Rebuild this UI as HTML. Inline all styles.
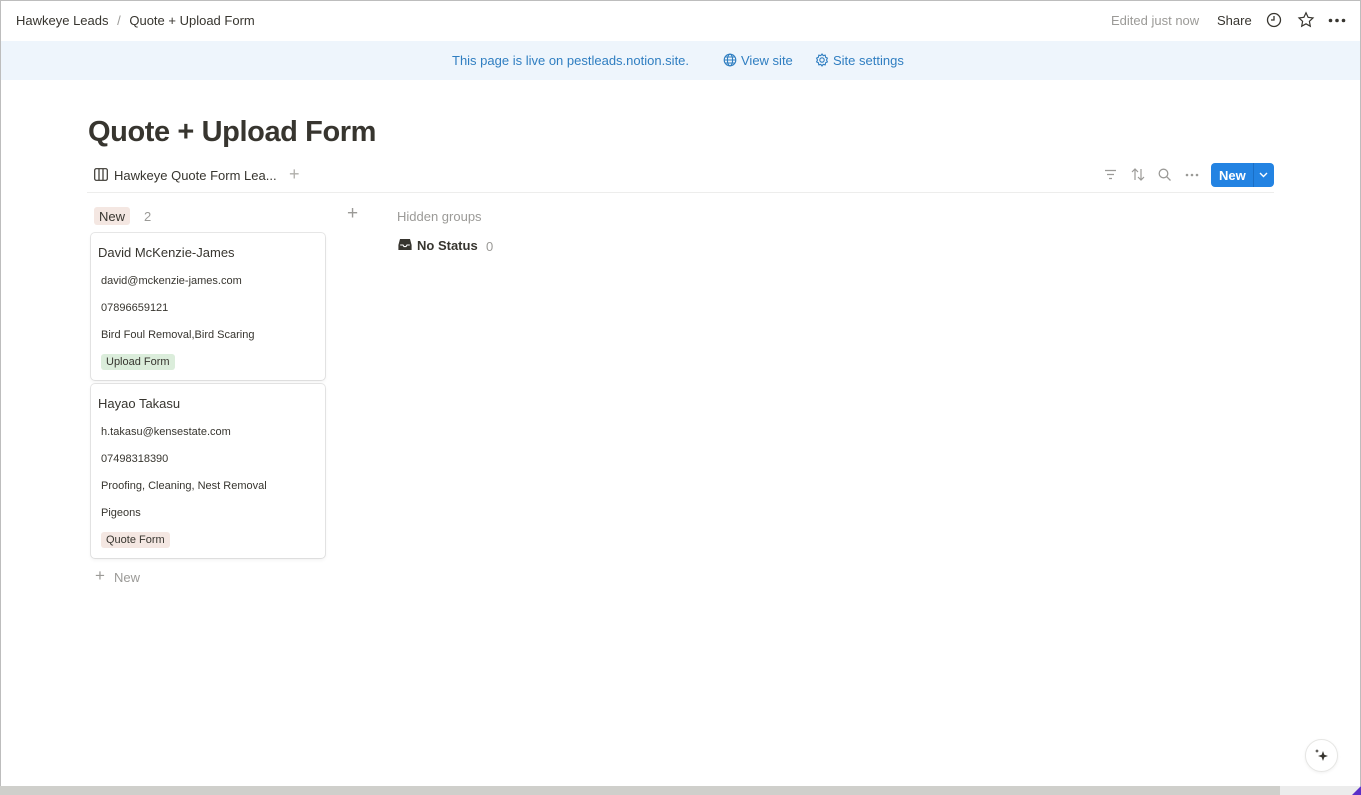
<!DOCTYPE html>
<html><head><meta charset="utf-8"><style>
*{box-sizing:border-box;margin:0;padding:0}
body{width:1361px;height:795px;overflow:hidden;background:#fff;font-family:"Liberation Sans",sans-serif;color:#37352f;position:relative}
.frame{position:absolute;inset:0;border:1px solid #bdbdbd;border-bottom:none}
.abs{position:absolute;white-space:nowrap}
.card{position:absolute;left:91px;width:234px;border-radius:4px;box-shadow:0 0 0 1px rgba(15,15,15,.1),0 2px 4px rgba(15,15,15,.06);background:#fff}
.f{position:absolute;left:10px;font-size:11px;color:#37352f}
.tag{position:absolute;left:10px;font-size:11px;padding:2px 5px;border-radius:3px}
</style></head><body>
<div class="frame"></div>
<div class="abs" style="left:16px;top:13px;font-size:13px">Hawkeye Leads <span style="color:#9b9a97;margin:0 5px">/</span> Quote + Upload Form</div>
<div class="abs" style="left:1111px;top:13px;font-size:13px;color:#9b9a97">Edited just now</div>
<div class="abs" style="left:1217px;top:13px;font-size:13px">Share</div>
<svg class="abs" style="left:1266px;top:12px" width="16" height="16" viewBox="0 0 16 16" fill="none" stroke="#37352f" stroke-width="1.3"><circle cx="8" cy="8" r="6.5"/><path d="M8 4v4H5"/></svg>
<svg class="abs" style="left:1297px;top:11px" width="18" height="18" viewBox="0 0 18 18" fill="none" stroke="#37352f" stroke-width="1.2"><path d="M9 1.8l2.1 4.5 4.9.6-3.6 3.4.9 4.9L9 12.8l-4.3 2.4.9-4.9L2 6.9l4.9-.6z"/></svg>
<svg class="abs" style="left:1328px;top:18px" width="18" height="5"><circle cx="2.5" cy="2.5" r="1.8" fill="#37352f"/><circle cx="9" cy="2.5" r="1.8" fill="#37352f"/><circle cx="15.5" cy="2.5" r="1.8" fill="#37352f"/></svg>
<div class="abs" style="left:1px;right:1px;top:41px;height:39px;background:#eef5fc"></div>
<div class="abs" style="left:452px;top:53px;font-size:13px;color:#2f7ec1">This page is live on pestleads.notion.site.</div>
<svg class="abs" style="left:723px;top:53px" width="14" height="14" viewBox="0 0 14 14" fill="none" stroke="#2f7ec1" stroke-width="1.1"><circle cx="7" cy="7" r="5.8"/><ellipse cx="7" cy="7" rx="2.6" ry="5.8"/><path d="M1.2 7h11.6M2 4h10M2 10h10"/></svg>
<div class="abs" style="left:741px;top:53px;font-size:13px;color:#2f7ec1">View site</div>
<svg class="abs" style="left:815px;top:53px" width="14" height="14" viewBox="0 0 14 14" fill="none" stroke="#2f7ec1" stroke-width="1.1"><circle cx="7" cy="7" r="2.2"/><path d="M7 1l1.2 1.6 2-.4.4 2 1.8.9-.9 1.9.9 1.9-1.8.9-.4 2-2-.4L7 13l-1.2-1.6-2 .4-.4-2-1.8-.9.9-1.9-.9-1.9 1.8-.9.4-2 2 .4z"/></svg>
<div class="abs" style="left:833px;top:53px;font-size:13px;color:#2f7ec1">Site settings</div>
<div class="abs" style="left:88px;top:116px;font-size:29px;font-weight:bold;letter-spacing:-.4px">Quote + Upload Form</div>
<svg class="abs" style="left:94px;top:168px" width="14" height="13" viewBox="0 0 14 13" fill="none" stroke="#37352f" stroke-width="1.2"><rect x=".7" y=".7" width="12.6" height="11.6" rx="1.5"/><path d="M5 1v11M9 1v11"/></svg>
<div class="abs" style="left:114px;top:168px;font-size:13px">Hawkeye Quote Form Lea...</div>
<div class="abs" style="left:289px;top:164px;font-size:18px;color:#b0afab;font-weight:300">+</div>
<div class="abs" style="left:87px;top:192px;width:1187px;height:1px;background:#ededec"></div>
<svg class="abs" style="left:1104px;top:169px" width="13" height="11" stroke="#9b9a97" stroke-width="1.2"><path d="M1 1.5h11M3 5.5h7M5 9.5h3"/></svg>
<svg class="abs" style="left:1131px;top:168px" width="14" height="13" fill="none" stroke="#9b9a97" stroke-width="1.2"><path d="M4 12V1M1 4l3-3 3 3M10 1v11M7 9l3 3 3-3"/></svg>
<svg class="abs" style="left:1158px;top:168px" width="13" height="13" fill="none" stroke="#9b9a97" stroke-width="1.3"><circle cx="5.5" cy="5.5" r="4.3"/><path d="M8.7 8.7L12.5 12.5"/></svg>
<svg class="abs" style="left:1185px;top:173px" width="14" height="4" fill="#9b9a97"><circle cx="2" cy="2" r="1.3"/><circle cx="7" cy="2" r="1.3"/><circle cx="12" cy="2" r="1.3"/></svg>
<div class="abs" style="left:1211px;top:163px;width:63px;height:24px;background:#2383e2;border-radius:4px"></div>
<div class="abs" style="left:1253px;top:163px;width:1px;height:24px;background:#1a6fc6"></div>
<div class="abs" style="left:1219px;top:168px;font-size:13px;color:#fff;font-weight:bold">New</div>
<svg class="abs" style="left:1259px;top:172px" width="9" height="6" fill="none" stroke="#fff" stroke-width="1.4"><path d="M1 1l3.5 3.5L8 1"/></svg>
<div class="abs" style="left:94px;top:207px;height:18px;padding:2px 5px;font-size:13px;background:#f4e7e2;border-radius:3px;color:#37352f">New</div>
<div class="abs" style="left:144px;top:209px;font-size:13px;color:#9b9a97">2</div>
<div class="abs" style="left:347px;top:203px;font-size:19px;color:#9b9a97;font-weight:300">+</div>
<div class="abs" style="left:397px;top:209px;font-size:13px;color:#9b9a97">Hidden groups</div>
<svg class="abs" style="left:398px;top:238px" width="14" height="13" viewBox="0 0 14 13"><path d="M2 1h10l1.6 6v5H.4V7z" fill="#37352f"/><path d="M2.2 7h2.8l1 1.6h2l1-1.6h2.8" fill="none" stroke="#fff" stroke-width="1.1"/></svg>
<div class="abs" style="left:417px;top:238px;font-size:13px;font-weight:bold">No Status</div>
<div class="abs" style="left:486px;top:239px;font-size:13px;color:#9b9a97">0</div>
<div class="card" style="top:233px;height:147px">
<div class="abs" style="left:7px;top:12px;font-size:13px">David McKenzie-James</div>
<div class="f" style="top:42px">david@mckenzie-james.com</div>
<div class="f" style="top:69px">07896659121</div>
<div class="f" style="top:96px">Bird Foul Removal,Bird Scaring</div>
<div class="tag" style="top:121px;background:#dbeddb">Upload Form</div>
</div>
<div class="card" style="top:384px;height:174px">
<div class="abs" style="left:7px;top:12px;font-size:13px">Hayao Takasu</div>
<div class="f" style="top:42px">h.takasu@kensestate.com</div>
<div class="f" style="top:69px">07498318390</div>
<div class="f" style="top:96px">Proofing, Cleaning, Nest Removal</div>
<div class="f" style="top:123px">Pigeons</div>
<div class="tag" style="top:148px;background:#f4e7e2">Quote Form</div>
</div>
<div class="abs" style="left:95px;top:566px;font-size:17px;color:#9b9a97;font-weight:300">+</div>
<div class="abs" style="left:114px;top:570px;font-size:13px;color:#9b9a97">New</div>
<div class="abs" style="left:1305px;top:739px;width:33px;height:33px;border-radius:50%;border:1px solid #e6e6e4;background:#fff;box-shadow:0 1px 3px rgba(0,0,0,.06)"></div>
<svg class="abs" style="left:1313px;top:747px" width="17" height="17" viewBox="0 0 17 17" fill="#37352f"><path d="M10 4l1.3 3.7L15 9l-3.7 1.3L10 14l-1.3-3.7L5 9l3.7-1.3z"/><path d="M4 2l.6 1.4L6 4l-1.4.6L4 6l-.6-1.4L2 4l1.4-.6z"/></svg>
<div class="abs" style="left:0;top:786px;width:1361px;height:9px;background:#ececec"></div>
<div class="abs" style="left:0;top:786px;width:1280px;height:9px;background:#cfcfcb"></div>
<div class="abs" style="left:1352px;top:786px;width:9px;height:9px;background:#5a2fc8;clip-path:polygon(100% 0,100% 100%,0 100%)"></div>
</body></html>
